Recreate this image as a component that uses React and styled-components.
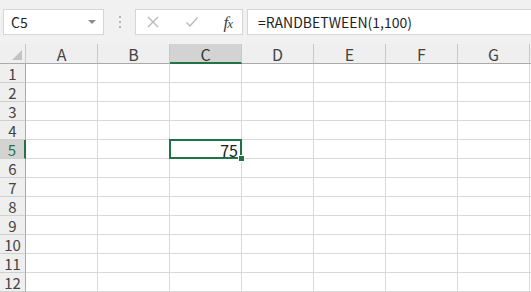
import React from 'react';
import styled, { createGlobalStyle } from 'styled-components';

const GlobalStyle = createGlobalStyle`
  html, body {
    margin: 0;
    padding: 0;
    background: #ffffff;
    overflow: hidden;
  }
  body {
    font-family: "Noto Sans CJK SC", "Noto Sans", sans-serif;
  }
`;

const COLS = ['A', 'B', 'C', 'D', 'E', 'F', 'G'];
const ROWS = 12;
const SELECTED = { col: 'C', row: 5 };
const VALUES = { C5: '75' };

const Sheet = styled.div`
  width: 531px;
  height: 292px;
  overflow: hidden;
  background: #ffffff;
`;

const Toolbar = styled.div`
  height: 44px;
  box-sizing: border-box;
  padding: 9px 0 9px 3px;
  display: flex;
  align-items: stretch;
  background: #f1f1f1;
`;

const Field = styled.div`
  box-sizing: border-box;
  background: #ffffff;
  border: 1px solid #d6d6d6;
  display: flex;
  align-items: center;
  font-size: 14px;
  color: #222;
`;

const NameBox = styled(Field)`
  width: 101px;
  padding: 0 6px 0 7px;
  justify-content: space-between;
`;

const Caret = styled.span`
  width: 0;
  height: 0;
  border-left: 4px solid transparent;
  border-right: 4px solid transparent;
  border-top: 4px solid #8a8a8a;
  margin-right: 1px;
`;

const Grip = styled.div`
  width: 31px;
  display: flex;
  flex-direction: column;
  align-items: center;
  justify-content: center;
  gap: 3px;
  span {
    width: 2px;
    height: 2px;
    background: #b4b4b4;
  }
`;

const IconBox = styled(Field)`
  width: 108px;
  padding: 0 10px 0 10px;
  justify-content: space-between;
`;

const Fx = styled.span`
  font-family: "Liberation Serif", serif;
  font-style: italic;
  font-size: 17px;
  line-height: 1;
  color: #444;
  letter-spacing: -1px;
  sub {
    font-size: 13px;
    vertical-align: 0;
  }
`;

const FormulaBox = styled(Field)`
  flex: 1;
  margin-left: 4px;
  border-right: none;
  padding-left: 10px;
  font-size: 14px;
  color: #1f1f1f;
`;

const Grid = styled.div`
  display: grid;
  grid-template-columns: 26px repeat(7, 72px) 1fr;
  grid-template-rows: 20px;
  grid-auto-rows: 19px;
`;

const HeadCell = styled.div`
  box-sizing: border-box;
  background: ${(p) => (p.$active ? '#d3d3d3' : '#efefef')};
  border-right: 1px solid #c8c8c8;
  border-bottom: ${(p) => (p.$active ? '2px solid #217346' : '1px solid #a9a9a9')};
  display: flex;
  align-items: center;
  justify-content: center;
  font-size: 16px;
  line-height: 1;
  color: ${(p) => (p.$active ? '#333' : '#444')};
  padding-top: 1px;
`;

const Corner = styled(HeadCell)`
  position: relative;
  &::after {
    content: '';
    position: absolute;
    right: 3px;
    bottom: 3px;
    width: 0;
    height: 0;
    border-left: 10px solid transparent;
    border-bottom: 10px solid #c3c3c3;
  }
`;

const RowHead = styled.div`
  box-sizing: border-box;
  overflow: hidden;
  background: ${(p) => (p.$active ? '#d3d3d3' : '#efefef')};
  border-right: ${(p) => (p.$active ? '2px solid #217346' : '1px solid #a9a9a9')};
  border-bottom: 1px solid #d0d0d0;
  display: flex;
  align-items: center;
  justify-content: center;
  font-size: 15px;
  line-height: 15px;
  color: ${(p) => (p.$active ? '#217346' : '#444')};
  padding-top: 1px;
`;

const Cell = styled.div`
  position: relative;
  box-sizing: border-box;
  border-right: 1px solid #d9d9d9;
  border-bottom: 1px solid #d9d9d9;
  display: flex;
  align-items: center;
  justify-content: flex-end;
  padding-right: 3px;
  padding-top: 1px;
  font-size: 16px;
  line-height: 1;
  color: #222;
  ${(p) =>
    p.$selected &&
    `
    z-index: 1;
    &::before {
      content: '';
      position: absolute;
      left: -1px;
      top: -1px;
      right: -1px;
      bottom: -1px;
      border: 2px solid #217346;
    }
    &::after {
      content: '';
      position: absolute;
      right: -4px;
      bottom: -4px;
      width: 5px;
      height: 5px;
      background: #217346;
      border: 1px solid #ffffff;
    }
  `}
`;

const Icon = ({ children }) => (
  <svg width="14" height="14" viewBox="0 0 14 14" fill="none" stroke="#b9b9b9" strokeWidth="1.4">
    {children}
  </svg>
);

export default function App() {
  const rows = Array.from({ length: ROWS }, (_, i) => i + 1);
  return (
    <Sheet>
      <GlobalStyle />
      <Toolbar>
        <NameBox>
          <span>C5</span>
          <Caret />
        </NameBox>
        <Grip>
          <span />
          <span />
          <span />
        </Grip>
        <IconBox>
          <Icon>
            <path d="M2 2 L12 12 M12 2 L2 12" />
          </Icon>
          <Icon>
            <path d="M1.5 7.5 L5 11 L12.5 2.5" />
          </Icon>
          <Fx>
            f<sub>x</sub>
          </Fx>
        </IconBox>
        <FormulaBox>=RANDBETWEEN(1,100)</FormulaBox>
      </Toolbar>
      <Grid>
        <Corner />
        {COLS.map((c) => (
          <HeadCell key={c} $active={c === SELECTED.col}>
            {c}
          </HeadCell>
        ))}
        <HeadCell />
        {rows.map((r) => (
          <React.Fragment key={r}>
            <RowHead $active={r === SELECTED.row}>{r}</RowHead>
            {COLS.map((c) => (
              <Cell key={c} $selected={c === SELECTED.col && r === SELECTED.row}>
                {VALUES[c + r]}
              </Cell>
            ))}
            <Cell />
          </React.Fragment>
        ))}
      </Grid>
    </Sheet>
  );
}
